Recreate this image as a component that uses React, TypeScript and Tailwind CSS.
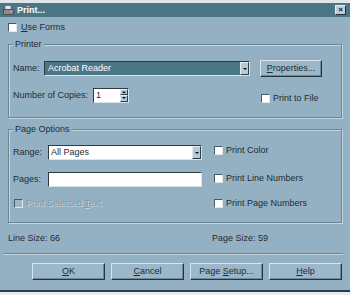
import type { ReactNode } from 'react'

const font = { fontFamily: '"Liberation Sans", Arial, sans-serif' }

function Check({ disabled = false }: { disabled?: boolean }) {
  return (
    <span
      className={
        'block h-[9px] w-[9px] shrink-0 border border-t-[#4a5a63] border-l-[#4a5a63] border-b-[#dde7ec] border-r-[#dde7ec] ' +
        (disabled ? 'bg-[#9cb7c9]' : 'bg-white')
      }
    />
  )
}

function CheckRow({ children, disabled = false }: { children: ReactNode; disabled?: boolean }) {
  return (
    <div className="flex items-center gap-[3px]">
      <Check disabled={disabled} />
      <span className={disabled ? 'text-[#7f98a7] [text-shadow:1px_1px_0_#c3d4de]' : ''}>{children}</span>
    </div>
  )
}

function Button({ children, className = '' }: { children: ReactNode; className?: string }) {
  return (
    <div
      className={
        'flex h-[17px] items-center justify-center border border-t-[#d7e4ec] border-l-[#d7e4ec] border-b-[#26343c] border-r-[#26343c] bg-[#9bb7c9] shadow-[inset_-1px_-1px_0_#6f8796] ' +
        className
      }
    >
      {children}
    </div>
  )
}

function Arrow({ light = true }: { light?: boolean }) {
  return (
    <div
      className={
        'flex h-full w-[9px] items-center justify-center border border-t-[#e2ebf0] border-l-[#e2ebf0] border-b-[#2f3d45] border-r-[#2f3d45] ' +
        (light ? 'bg-[#b6c9d4]' : 'bg-[#b6c9d4]')
      }
    >
      <span className="block h-0 w-0 border-x-[2px] border-t-[2px] border-x-transparent border-t-[#111]" />
    </div>
  )
}

function Group({ title, className, children }: { title: string; className: string; children: ReactNode }) {
  return (
    <div className={'relative ml-[8px] w-[334px] border border-[#6c8493] shadow-[1px_1px_0_#c6d6df,inset_1px_1px_0_#c6d6df] ' + className}>
      <span className="absolute -top-[6px] left-[4px] bg-[#94b1c4] px-[2px] leading-[11px]">{title}</span>
      {children}
    </div>
  )
}

export default function App() {
  return (
    <div className="h-[295px] w-[350px] overflow-hidden bg-[#e6ecef] text-[9px] leading-[11px] text-[#1f2b33]" style={font}>
      <div className="h-[3px] bg-[#dfe6ea]" />
      <div className="h-[289px] border-b-[2px] border-[#2b3d47] bg-[#94b1c4]">
        {/* title bar */}
        <div className="flex h-[14px] items-center bg-[#4b7686] pl-[3px] pr-[4px]">
          <svg width="11" height="10" viewBox="0 0 11 10">
            <rect x="2" y="0.5" width="6" height="4" fill="#e8e8e8" stroke="#555" strokeWidth="0.6" />
            <path d="M0.5 4.5 L9 4.5 L10.5 6 L10.5 9.5 L0.5 9.5 Z" fill="#8c8c8c" stroke="#333" strokeWidth="0.6" />
            <rect x="7" y="6" width="2" height="1" fill="#d8c23a" />
          </svg>
          <span className="ml-[3px] font-bold text-white">Print...</span>
          <div className="flex-1" />
          <div className="flex h-[10px] w-[11px] items-center justify-center border border-t-[#e3ecf1] border-l-[#e3ecf1] border-b-[#263239] border-r-[#263239] bg-[#bccdd7] text-[8px] font-bold leading-none text-[#111]">
            ×
          </div>
        </div>

        {/* use forms */}
        <div className="ml-[8px] mt-[5px] flex h-[10px] items-center gap-[4px]">
          <Check />
          <span>
            <u>U</u>se Forms
          </span>
        </div>

        <Group title="Printer" className="mt-[12px] h-[74px]">
          <div className="mt-[15px] flex h-[17px] items-center pl-[4px]">
            <span className="w-[31px]">Name:</span>
            <div className="flex h-[15px] w-[206px] items-stretch border border-t-[#2d3b44] border-l-[#2d3b44] border-b-[#d9e5eb] border-r-[#d9e5eb] bg-[#4b7686]">
              <span className="flex-1 pl-[3px] leading-[13px] text-white">Acrobat Reader</span>
              <Arrow />
            </div>
            <Button className="ml-[10px] w-[62px]">
              <span>
                <u>P</u>roperties...
              </span>
            </Button>
          </div>
          <div className="mt-[10px] flex h-[16px] items-center pl-[4px]">
            <span className="w-[80px]">Number of Copies:</span>
            <div className="flex h-[15px] w-[36px] items-stretch border border-t-[#2d3b44] border-l-[#2d3b44] border-b-[#d9e5eb] border-r-[#d9e5eb] bg-white">
              <span className="flex-1 pl-[2px] leading-[13px]">1</span>
              <div className="flex w-[8px] flex-col">
                <div className="flex flex-1 items-center justify-center border border-t-[#e2ebf0] border-l-[#e2ebf0] border-b-[#2f3d45] border-r-[#2f3d45] bg-[#b6c9d4]">
                  <span className="block h-0 w-0 border-x-[2px] border-b-[2px] border-x-transparent border-b-[#111]" />
                </div>
                <div className="flex flex-1 items-center justify-center border border-t-[#e2ebf0] border-l-[#e2ebf0] border-b-[#2f3d45] border-r-[#2f3d45] bg-[#b6c9d4]">
                  <span className="block h-0 w-0 border-x-[2px] border-t-[2px] border-x-transparent border-t-[#111]" />
                </div>
              </div>
            </div>
            <div className="ml-[132px] mt-[6px]">
              <CheckRow>Print to File</CheckRow>
            </div>
          </div>
        </Group>

        <Group title="Page Options" className="mt-[11px] h-[94px]">
          <div className="mt-[15px] flex h-[15px] items-center pl-[4px]">
            <div className="flex w-[201px] shrink-0 items-center">
              <span className="w-[35px]">Range:</span>
              <div className="flex h-[15px] w-[154px] items-stretch border border-t-[#2d3b44] border-l-[#2d3b44] border-b-[#d9e5eb] border-r-[#d9e5eb] bg-white">
                <span className="flex-1 pl-[2px] leading-[13px]">All Pages</span>
                <Arrow />
              </div>
            </div>
            <div className="-mt-[5px]">
              <CheckRow>Print Color</CheckRow>
            </div>
          </div>
          <div className="mt-[12px] flex h-[15px] items-center pl-[4px]">
            <div className="flex w-[201px] shrink-0 items-center">
              <span className="w-[35px]">Pages:</span>
              <div className="h-[15px] w-[154px] border border-t-[#2d3b44] border-l-[#2d3b44] border-b-[#d9e5eb] border-r-[#d9e5eb] bg-white" />
            </div>
            <div className="-mt-[3px]">
              <CheckRow>Print Line Numbers</CheckRow>
            </div>
          </div>
          <div className="mt-[11px] flex h-[10px] items-center pl-[5px]">
            <div className="w-[200px] shrink-0">
              <CheckRow disabled>
                Print Selected <u>T</u>ext
              </CheckRow>
            </div>
            <CheckRow>Print Page Numbers</CheckRow>
          </div>
        </Group>

        <div className="mt-[10px] flex h-[11px] items-center pl-[8px]">
          <span className="w-[204px]">Line Size: 66</span>
          <span>Page Size: 59</span>
        </div>

        <div className="ml-[3px] mt-[9px] h-[2px] w-[340px] border-t border-b border-t-[#6c8493] border-b-[#c6d6df]" />

        <div className="ml-[32px] mt-[8px] flex gap-[6px]">
          <Button className="w-[73px]">
            <span>
              <u>O</u>K
            </span>
          </Button>
          <Button className="w-[73px]">
            <span>
              <u>C</u>ancel
            </span>
          </Button>
          <Button className="w-[73px]">
            <span>
              Page <u>S</u>etup...
            </span>
          </Button>
          <Button className="w-[73px]">
            <span>
              <u>H</u>elp
            </span>
          </Button>
        </div>
      </div>
    </div>
  )
}
